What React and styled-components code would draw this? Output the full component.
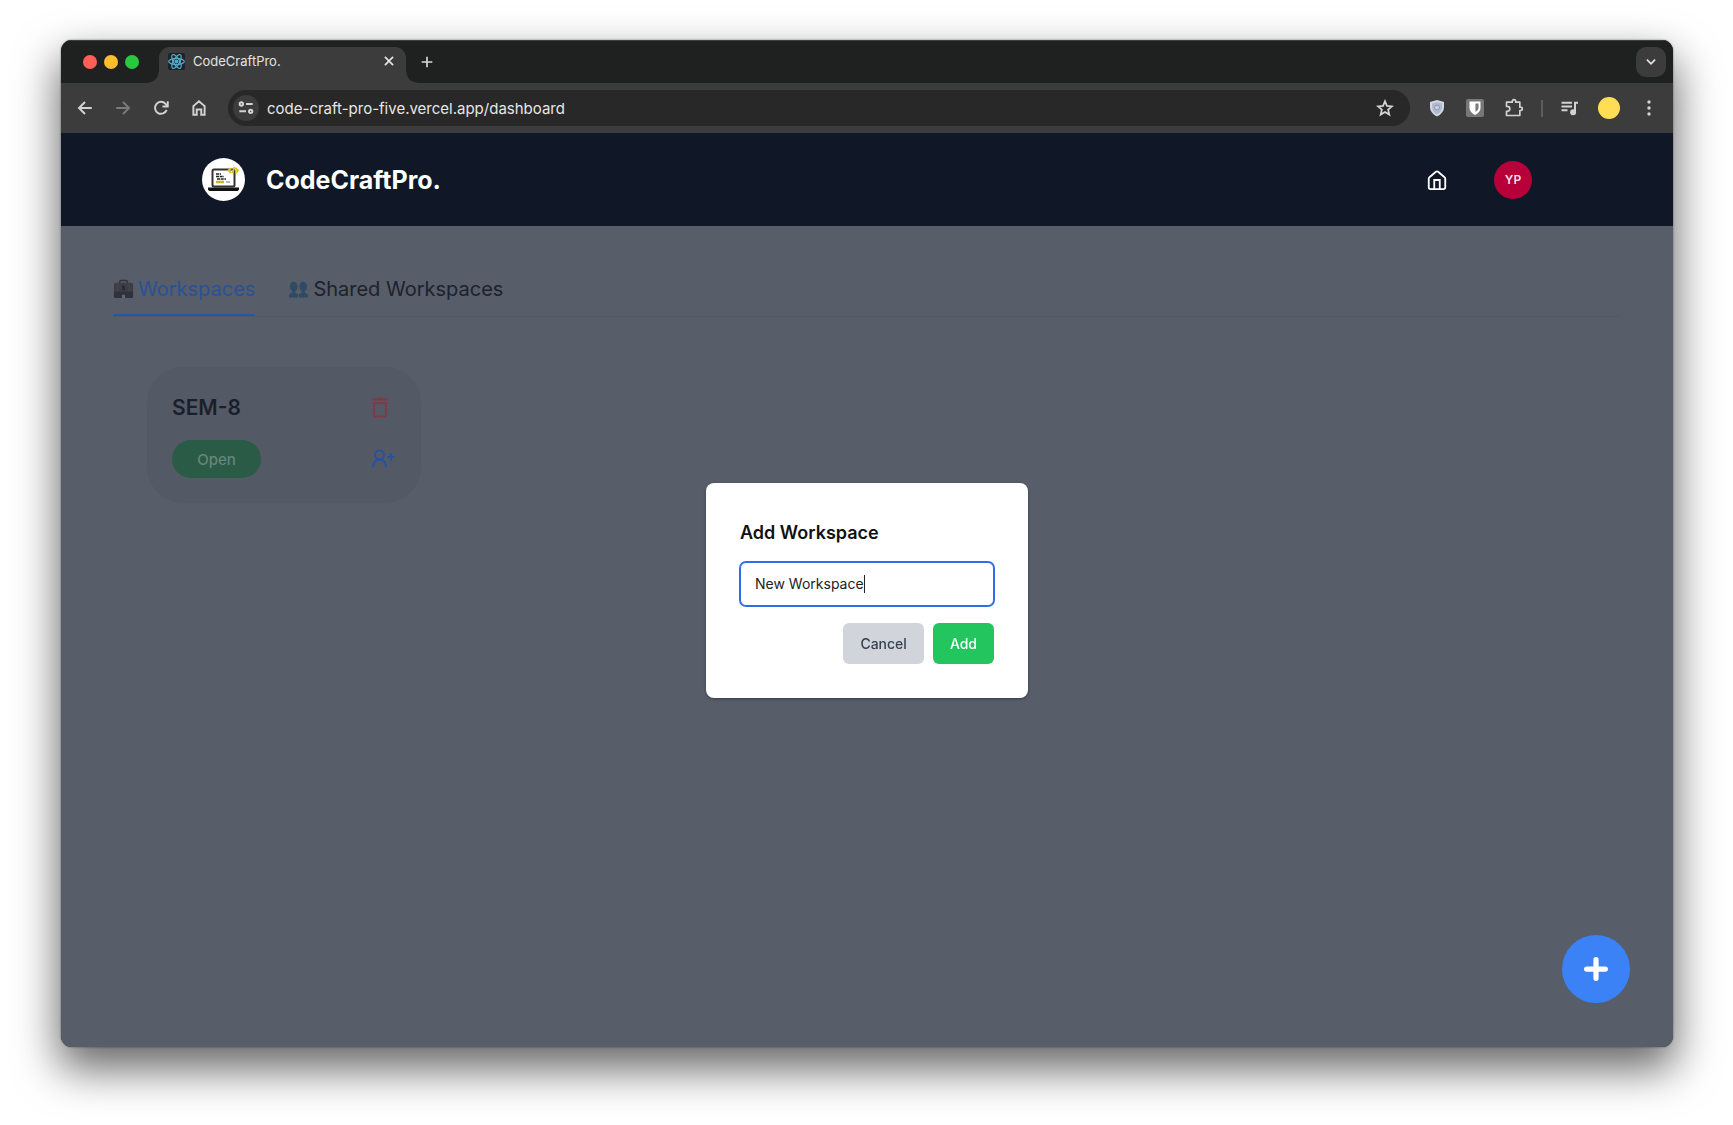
import React from "react";
import styled, { createGlobalStyle } from "styled-components";

const GlobalStyle = createGlobalStyle`
  * {
    box-sizing: border-box;
  }
  body {
    margin: 0;
    background: #fff;
    font-family: Inter, "Liberation Sans", sans-serif;
  }
  button, input {
    font-family: inherit;
  }
  button {
    border: 0;
    padding: 0;
    background: none;
    color: inherit;
    cursor: pointer;
  }
  svg {
    display: block;
  }
`;

const Desktop = styled.div`
  display: flex;
  min-height: 100vh;
  padding: 40px 60px 78px 61px;
`;

const Window = styled.div`
  display: flex;
  flex-direction: column;
  flex: 1;
  overflow: hidden;
  border-radius: 11px;
  background: #3c3c3c;
  box-shadow: 0 0 2px rgba(0, 0, 0, 0.5), 0 20px 44px 2px rgba(0, 0, 0, 0.6);
`;

const TabStrip = styled.div`
  display: flex;
  height: 43px;
  padding: 0 7px 0 22px;
  background: #1f2120;
  border-top: 1px solid #3d403f;
`;

const Lights = styled.div`
  display: flex;
  align-items: center;
  gap: 7px;
  margin-right: 20px;
`;

const Light = styled.button`
  width: 14px;
  height: 14px;
  border-radius: 50%;
  background: ${(props) => props.$color};
`;

const BrowserTab = styled.div`
  position: relative;
  display: flex;
  align-items: center;
  width: 247px;
  margin-top: 6px;
  padding: 0 10px 8px 9px;
  border-radius: 11px 11px 0 0;
  background: #3c3c3c;
  color: #e3e3e3;
  font-size: 13px;

  &::before,
  &::after {
    content: "";
    position: absolute;
    bottom: 0;
    width: 11px;
    height: 11px;
  }
  &::before {
    right: 100%;
    background: radial-gradient(circle at 0 0, transparent 10px, #3c3c3c 11px);
  }
  &::after {
    left: 100%;
    background: radial-gradient(circle at 100% 0, transparent 10px, #3c3c3c 11px);
  }
`;

const Favicon = styled.span`
  display: flex;
  margin-right: 8px;
  background: #20232a;
  border-radius: 2px;
`;

const TabTitle = styled.span`
  flex: 1;
`;

const NewTab = styled.button`
  margin-left: 13px;
  color: #d8d8d8;
`;

const TabSearch = styled.button`
  display: flex;
  align-items: center;
  justify-content: center;
  width: 30px;
  height: 30px;
  margin: 6px 0 0 auto;
  border-radius: 10px;
  background: #3c3c3c;
  color: #e3e3e3;
`;

const Toolbar = styled.div`
  display: flex;
  align-items: center;
  height: 50px;
  padding: 0 15px;
  color: #d2d2d2;
`;

const NavButtons = styled.div`
  display: flex;
  gap: 20px;
  margin-right: 20px;
`;

const NavButton = styled.button`
  color: ${(props) => (props.disabled ? "#7a7a7a" : "#d2d2d2")};
`;

const AddressBar = styled.div`
  display: flex;
  align-items: center;
  flex: 1;
  height: 36px;
  padding: 0 16px 0 5px;
  border-radius: 18px;
  background: #282828;
`;

const SiteInfo = styled.button`
  display: flex;
  align-items: center;
  justify-content: center;
  width: 26px;
  height: 26px;
  border-radius: 50%;
  background: #3c3c3c;
`;

const Address = styled.input`
  flex: 1;
  min-width: 0;
  margin-left: 8px;
  padding: 0;
  border: 0;
  outline: 0;
  background: none;
  color: #e6e6e6;
  font-size: 15px;
`;

const Extensions = styled.div`
  display: flex;
  align-items: center;
  gap: 20px;
  margin-left: 18px;
`;

const Divider = styled.span`
  width: 2px;
  height: 17px;
  margin: 0 -3px;
  background: #5c5c5c;
`;

const Profile = styled.button`
  width: 22px;
  height: 22px;
  border-radius: 50%;
  background: #ffdd55;
`;

const Viewport = styled.div`
  position: relative;
  display: flex;
  flex-direction: column;
  flex: 1;
  background: #575d69;
`;

const Header = styled.header`
  position: relative;
  z-index: 2;
  height: 93px;
  background: #101726;
`;

const HeaderInner = styled.div`
  display: flex;
  align-items: center;
  max-width: 1330px;
  height: 100%;
  margin: 0 auto;
`;

const Brand = styled.a`
  display: flex;
  align-items: center;
  gap: 21px;
  color: #fff;
  font-size: 25px;
  font-weight: 700;
  text-decoration: none;
`;

const HomeLink = styled.a`
  margin-left: auto;
  color: #fff;
`;

const Avatar = styled.button`
  width: 38px;
  height: 38px;
  margin-left: 46px;
  border-radius: 50%;
  background: #b70039;
  color: #f6dfe6;
  font-size: 12px;
  font-weight: 600;
`;

const Main = styled.main`
  flex: 1;
  padding: 44px 52px;
`;

const Tabs = styled.nav`
  display: flex;
  gap: 33px;
  border-bottom: 1px solid #535965;
`;

const Tab = styled.button`
  display: flex;
  align-items: center;
  gap: 4px;
  height: 46px;
  padding-bottom: 6px;
  border-bottom: 2px solid ${(props) => (props.$active ? "#28559f" : "transparent")};
  color: ${(props) => (props.$active ? "#285298" : "#1d222d")};
  font-size: 20px;
`;

const Card = styled.section`
  display: grid;
  grid-template-columns: 1fr auto;
  align-items: center;
  row-gap: 16px;
  width: 274px;
  margin: 50px 34px;
  padding: 25px;
  border-radius: 36px;
  background: #545a65;
`;

const CardTitle = styled.h2`
  margin: 0;
  color: #1a202b;
  font-size: 21px;
  font-weight: 600;
  line-height: 32px;
`;

const OpenButton = styled.button`
  width: 89px;
  height: 38px;
  border-radius: 20px;
  background: #295b46;
  color: #68857b;
  font-size: 15px;
  font-weight: 500;
`;

const IconButton = styled.button`
  color: ${(props) => props.$color};
`;

const Overlay = styled.div`
  position: absolute;
  inset: 0;
  z-index: 1;
  display: flex;
  align-items: center;
  justify-content: center;
`;

const Dialog = styled.form`
  width: 322px;
  padding: 34px;
  border-radius: 8px;
  background: #fff;
  box-shadow: 0 1px 3px rgba(0, 0, 0, 0.35);
`;

const DialogTitle = styled.label`
  display: block;
  margin-bottom: 13px;
  color: #111;
  font-size: 18px;
  font-weight: 600;
  line-height: 32px;
`;

const Field = styled.div`
  display: flex;
  align-items: center;
  height: 44px;
  padding: 0 14px;
  border: 1px solid #2f6bea;
  border-radius: 6px;
  box-shadow: 0 0 0 1px #2f6bea;
  background: #fff;
`;

const NameInput = styled.input`
  field-sizing: content;
  min-width: 1px;
  max-width: 100%;
  padding: 0;
  border: 0;
  outline: 0;
  background: none;
  caret-color: transparent;
  color: #222;
  font-size: 14px;
`;

const Caret = styled.span`
  width: 1px;
  height: 18px;
  background: #222;
`;

const Actions = styled.div`
  display: flex;
  justify-content: flex-end;
  gap: 9px;
  margin-top: 17px;
`;

const ActionButton = styled.button`
  height: 41px;
  padding: 0 17px;
  border-radius: 6px;
  background: ${(props) => (props.$primary ? "#22c55e" : "#d1d5db")};
  color: ${(props) => (props.$primary ? "#fff" : "#374151")};
  font-size: 14px;
  font-weight: 500;
`;

const AddButton = styled.button`
  position: absolute;
  right: 43px;
  bottom: 44px;
  z-index: 2;
  display: flex;
  align-items: center;
  justify-content: center;
  width: 68px;
  height: 68px;
  border-radius: 50%;
  background: #3b82f6;
  color: #fff;
`;

const Icon = ({ size = 18, stroke = 2, children }) => (
  <svg
    width={size}
    height={size}
    viewBox="0 0 24 24"
    fill="none"
    stroke="currentColor"
    strokeWidth={stroke}
    aria-hidden="true"
  >
    {children}
  </svg>
);

const ReactLogo = () => (
  <svg width="17" height="17" viewBox="0 0 24 24" fill="none" stroke="#4fa9c2" strokeWidth="1.8" aria-hidden="true">
    <ellipse cx="12" cy="12" rx="11" ry="4.4" />
    <ellipse cx="12" cy="12" rx="11" ry="4.4" transform="rotate(60 12 12)" />
    <ellipse cx="12" cy="12" rx="11" ry="4.4" transform="rotate(120 12 12)" />
    <circle cx="12" cy="12" r="2" fill="#4fa9c2" />
  </svg>
);

const LaptopLogo = () => (
  <svg width="43" height="43" viewBox="0 0 43 43" aria-hidden="true">
    <circle cx="21.5" cy="21.5" r="21.5" fill="#fff" />
    <rect x="10.5" y="11.5" width="22" height="17" rx="1.5" fill="#fff" stroke="#333" strokeWidth="2" />
    <path d="M6 29.5h31v1.5q0 2-3 2H9q-3 0-3-2z" fill="#111" />
    <path d="M14 16h5M14 18.5h8M15 21h9" stroke="#222" strokeWidth="1.6" strokeDasharray="3 .7" />
    <path d="M14 24h8" stroke="#c9b42c" strokeWidth="2.4" />
    <path d="M24 24h4" stroke="#777" strokeWidth="1" />
    <path d="M29 10l-2.500 2.500 2.500 2.500M33.500 10l2.500 2.500-2.500 2.500M32.500 9l-2 6" fill="none" stroke="#d8c520" strokeWidth="2" />
  </svg>
);

const Briefcase = () => (
  <svg width="21" height="21" viewBox="0 0 22 22" aria-hidden="true">
    <path d="M7 5V3q0-1.500 1.500-1.500h5Q15 1.500 15 3v2" fill="none" stroke="#30343c" strokeWidth="1.500" />
    <rect x="1" y="4" width="20" height="16" rx="2" fill="#3d3e45" />
    <path d="M1 13h20v5q0 2-2 2H3q-2 0-2-2z" fill="#2f323a" />
    <path d="M5 4v9M17 4v9" stroke="#44464d" strokeWidth="1.500" />
    <path d="M9.500 7h3l-.5 5h-2z" fill="#25282f" />
    <path d="M9.500 16.500h3V20h-3z" fill="#656a74" />
  </svg>
);

const People = () => (
  <svg width="21" height="21" viewBox="0 0 22 22" fill="#2f4a63" aria-hidden="true">
    <ellipse cx="6" cy="8" rx="4" ry="5" />
    <ellipse cx="16" cy="8" rx="4" ry="5" />
    <path d="M4.500 12h3v2.500l3 1.500v3.500H1V17q0-1.500 3.500-2.500zM14.500 12h3v2.500Q21 15.500 21 17v2.500h-9.500V16l3-1.500z" />
  </svg>
);

const App = () => {
  const [name, setName] = React.useState("New Workspace");

  return (
    <Desktop>
      <GlobalStyle />
      <Window>
        <TabStrip>
          <Lights>
            <Light $color="#ff5f57" aria-label="Close window" />
            <Light $color="#febc2e" aria-label="Minimize" />
            <Light $color="#28c840" aria-label="Zoom" />
          </Lights>
          <BrowserTab>
            <Favicon><ReactLogo /></Favicon>
            <TabTitle>CodeCraftPro.</TabTitle>
            <button aria-label="Close tab">
              <Icon size={14} stroke={3}><path d="M5 5l14 14M19 5L5 19" /></Icon>
            </button>
          </BrowserTab>
          <NewTab aria-label="New tab">
            <Icon size={16}><path d="M12 4v16M4 12h16" strokeWidth="2.500" /></Icon>
          </NewTab>
          <TabSearch aria-label="Search tabs">
            <Icon size={14} stroke={3}><path d="M5 8l7 7 7-7" /></Icon>
          </TabSearch>
        </TabStrip>

        <Toolbar>
          <NavButtons>
            <NavButton aria-label="Back">
              <Icon stroke={2.6}><path d="M21 12H5M12 4l-8 8 8 8" /></Icon>
            </NavButton>
            <NavButton aria-label="Forward" disabled>
              <Icon stroke={2.6}><path d="M3 12h16M12 4l8 8-8 8" /></Icon>
            </NavButton>
            <NavButton aria-label="Reload">
              <Icon stroke={2.6}><path d="M19.500 14.500A8 8 0 1 1 18 6.500l2.500 2.500M21 3v7h-7" /></Icon>
            </NavButton>
            <NavButton aria-label="Home">
              <Icon stroke={2.6}><path d="M4.500 21V9.500L12 3l7.500 6.500V21H15v-7H9v7z" /></Icon>
            </NavButton>
          </NavButtons>
          <AddressBar>
            <SiteInfo aria-label="Site information">
              <Icon size={16} stroke={3}>
                <path d="M12 6h10M2 17h10" />
                <circle cx="5" cy="6" r="2.500" />
                <circle cx="19" cy="17" r="2.500" />
              </Icon>
            </SiteInfo>
            <Address aria-label="Address" defaultValue="code-craft-pro-five.vercel.app/dashboard" />
            <button aria-label="Bookmark">
              <Icon stroke={2.4}><path d="M12 3l2.600 6.200 6.700.6-5.100 4.400 1.500 6.500-5.700-3.400-5.700 3.400 1.500-6.500-5.100-4.400 6.700-.6z" /></Icon>
            </button>
          </AddressBar>
          <Extensions>
            <button aria-label="Privacy shield">
              <svg width="18" height="18" viewBox="0 0 18 18" aria-hidden="true">
                <path d="M9 1l7 2v5q0 6-7 9.500Q2 14 2 8V3z" fill="#d3d9e6" />
                <path d="M9 3l5 1.500V8q0 4.500-5 7.500-5-3-5-7.500V4.500z" fill="#b1bace" />
                <circle cx="9" cy="8.500" r="2.500" fill="#c7cedc" stroke="#8d98ae" />
              </svg>
            </button>
            <button aria-label="Password manager">
              <svg width="18" height="18" viewBox="0 0 18 18" aria-hidden="true">
                <rect width="18" height="18" rx="2" fill="#777" />
                <path d="M3.500 2.500h11V9q0 4-5.500 7-5.500-3-5.500-7z" fill="#fff" />
                <path d="M9.500 4.500h3V9q0 2-3 4z" fill="#777" />
              </svg>
            </button>
            <button aria-label="Extensions">
              <Icon size={20}>
                <path d="M3 5h7V4a2 2 0 0 1 4 0v1h5v6h1a2 2 0 0 1 0 4h-1v6H3v-5h1a3 3 0 0 0 0-6H3z" strokeLinejoin="round" />
              </Icon>
            </button>
            <Divider />
            <button aria-label="Media controls">
              <Icon>
                <path d="M2 5h14M2 10h14M2 15h8M20 17V5h4" strokeWidth="2.600" />
                <circle cx="17.500" cy="17.500" r="3" fill="currentColor" />
              </Icon>
            </button>
            <Profile aria-label="Profile" />
            <button aria-label="Menu">
              <svg width="18" height="18" viewBox="0 0 18 18" fill="currentColor" aria-hidden="true">
                <circle cx="9" cy="3" r="1.700" />
                <circle cx="9" cy="9" r="1.700" />
                <circle cx="9" cy="15" r="1.700" />
              </svg>
            </button>
          </Extensions>
        </Toolbar>

        <Viewport>
          <Header>
            <HeaderInner>
              <Brand href="#">
                <LaptopLogo />
                CodeCraftPro.
              </Brand>
              <HomeLink href="#" aria-label="Home">
                <Icon size={22}>
                  <path d="M9 22V12h6v10" />
                  <path d="M3 10.500a2 2 0 0 1 .8-1.600l7-5.800a2 2 0 0 1 2.400 0l7 5.800a2 2 0 0 1 .8 1.600V20a2 2 0 0 1-2 2H5a2 2 0 0 1-2-2z" />
                </Icon>
              </HomeLink>
              <Avatar>YP</Avatar>
            </HeaderInner>
          </Header>

          <Main>
            <Tabs>
              <Tab $active><Briefcase />Workspaces</Tab>
              <Tab><People />Shared Workspaces</Tab>
            </Tabs>
            <Card>
              <CardTitle>SEM-8</CardTitle>
              <IconButton $color="#7c3b47" aria-label="Delete workspace">
                <Icon size={24} stroke={2.2}>
                  <path d="M0 3.500h16M5 2.500h6M2 7h12v12a1.500 1.500 0 0 1-1.500 1.500h-9A1.500 1.500 0 0 1 2 19z" />
                </Icon>
              </IconButton>
              <OpenButton>Open</OpenButton>
              <IconButton $color="#2a5298" aria-label="Share workspace">
                <Icon size={24} stroke={2.2}>
                  <circle cx="7.500" cy="8" r="4.500" />
                  <path d="M1 20.500q.5-8 6.500-8t6.500 8M19 6v8M15 10h8" />
                </Icon>
              </IconButton>
            </Card>
          </Main>

          <Overlay>
            <Dialog onSubmit={(e) => e.preventDefault()}>
              <DialogTitle htmlFor="workspace-name">Add Workspace</DialogTitle>
              <Field>
                <NameInput
                  id="workspace-name"
                  autoFocus
                  value={name}
                  onChange={(e) => setName(e.target.value)}
                />
                <Caret />
              </Field>
              <Actions>
                <ActionButton type="button">Cancel</ActionButton>
                <ActionButton $primary type="submit">Add</ActionButton>
              </Actions>
            </Dialog>
          </Overlay>

          <AddButton aria-label="Add workspace">
            <Icon size={28}><path d="M12 4v16M4 12h16" strokeWidth="4.500" strokeLinecap="round" /></Icon>
          </AddButton>
        </Viewport>
      </Window>
    </Desktop>
  );
};

export default App;
